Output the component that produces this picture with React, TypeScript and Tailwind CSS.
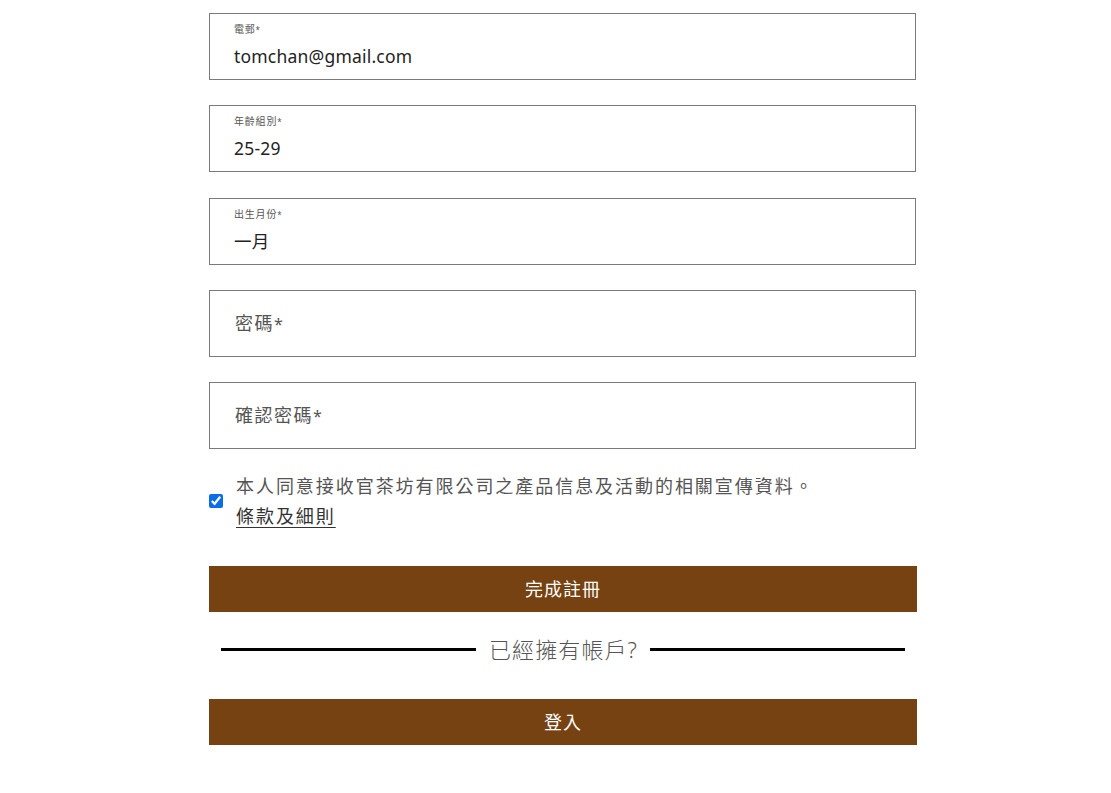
const font = "font-['Noto_Sans','Noto_Sans_CJK_TC',sans-serif]";

function LabeledField({ label, value }: { label: string; value: string }) {
  return (
    <div className="h-[67px] border border-[#7a7a7a] pl-[24px] pt-[8px]">
      <div className="text-[10px] leading-[14px] text-[#555] tracking-[0.8px]">
        {label}
        <span className="text-[8px]">*</span>
      </div>
      <div className="mt-[7px] text-[17.5px] leading-[24px] text-[#222] tracking-[0.2px]">{value}</div>
    </div>
  );
}

function PlaceholderField({ label }: { label: string }) {
  return (
    <div className="flex h-[67px] items-center border border-[#7a7a7a] pl-[25px]">
      <span className="text-[18px] leading-[24px] text-[#555] tracking-[1.5px]">
        {label}
        <span className="text-[16px]">*</span>
      </span>
    </div>
  );
}

export default function App() {
  return (
    <div className={`${font} min-h-[793px] bg-white`}>
      <div className="ml-[209px] w-[708px] pt-[13px]">
        <div className="flex w-[707px] flex-col gap-[25.25px]">
          <LabeledField label="電郵" value="tomchan@gmail.com" />
          <LabeledField label="年齡組別" value="25-29" />
          <LabeledField label="出生月份" value="一月" />
          <PlaceholderField label="密碼" />
          <PlaceholderField label="確認密碼" />
        </div>

        <div className="mt-[22px] flex items-center gap-[13px]">
          <input type="checkbox" defaultChecked className="h-[14px] w-[14px] accent-[#0b6ee8]" />
          <div className="text-[18px] leading-[30px] text-[#555] tracking-[1.95px]">
            <div>本人同意接收官茶坊有限公司之產品信息及活動的相關宣傳資料。</div>
            <a className="text-[#333] underline underline-offset-[4px]">條款及細則</a>
          </div>
        </div>

        <button className="mt-[35px] flex h-[46px] w-full items-center justify-center bg-[#774212] text-[18px] tracking-[1px] text-white">
          完成註冊
        </button>

        <div className="mt-[23px] flex h-[28px] items-center gap-[12px] px-[12px]">
          <div className="h-[3px] flex-1 bg-black" />
          <span className="pl-[1px] text-[22px] font-light leading-[28px] tracking-[1.1px] text-[#555]">
            已經擁有帳戶?
          </span>
          <div className="h-[3px] flex-1 bg-black" />
        </div>

        <button className="mt-[36px] flex h-[46px] w-full items-center justify-center bg-[#774212] text-[18px] tracking-[1px] text-white">
          登入
        </button>
      </div>
    </div>
  );
}
